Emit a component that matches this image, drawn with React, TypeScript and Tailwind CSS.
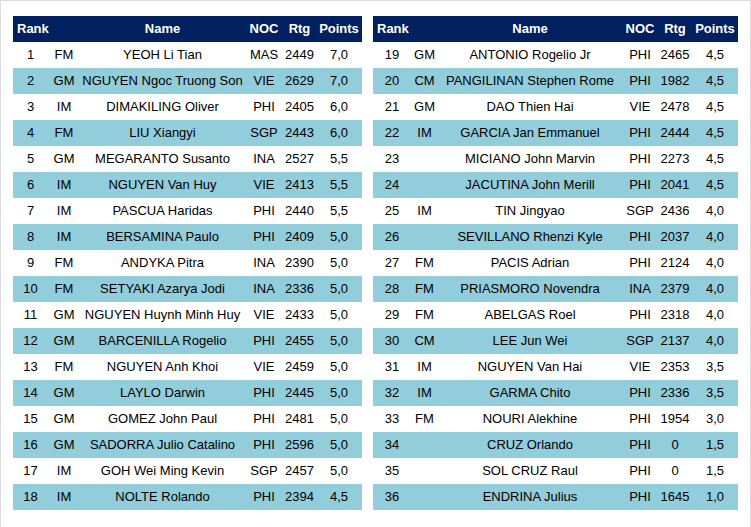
type Row = [number, string, string, string, string, string]

const left: Row[] = [
  [1, 'FM', 'YEOH Li Tian', 'MAS', '2449', '7,0'],
  [2, 'GM', 'NGUYEN Ngoc Truong Son', 'VIE', '2629', '7,0'],
  [3, 'IM', 'DIMAKILING Oliver', 'PHI', '2405', '6,0'],
  [4, 'FM', 'LIU Xiangyi', 'SGP', '2443', '6,0'],
  [5, 'GM', 'MEGARANTO Susanto', 'INA', '2527', '5,5'],
  [6, 'IM', 'NGUYEN Van Huy', 'VIE', '2413', '5,5'],
  [7, 'IM', 'PASCUA Haridas', 'PHI', '2440', '5,5'],
  [8, 'IM', 'BERSAMINA Paulo', 'PHI', '2409', '5,0'],
  [9, 'FM', 'ANDYKA Pitra', 'INA', '2390', '5,0'],
  [10, 'FM', 'SETYAKI Azarya Jodi', 'INA', '2336', '5,0'],
  [11, 'GM', 'NGUYEN Huynh Minh Huy', 'VIE', '2433', '5,0'],
  [12, 'GM', 'BARCENILLA Rogelio', 'PHI', '2455', '5,0'],
  [13, 'FM', 'NGUYEN Anh Khoi', 'VIE', '2459', '5,0'],
  [14, 'GM', 'LAYLO Darwin', 'PHI', '2445', '5,0'],
  [15, 'GM', 'GOMEZ John Paul', 'PHI', '2481', '5,0'],
  [16, 'GM', 'SADORRA Julio Catalino', 'PHI', '2596', '5,0'],
  [17, 'IM', 'GOH Wei Ming Kevin', 'SGP', '2457', '5,0'],
  [18, 'IM', 'NOLTE Rolando', 'PHI', '2394', '4,5'],
]

const right: Row[] = [
  [19, 'GM', 'ANTONIO Rogelio Jr', 'PHI', '2465', '4,5'],
  [20, 'CM', 'PANGILINAN Stephen Rome', 'PHI', '1982', '4,5'],
  [21, 'GM', 'DAO Thien Hai', 'VIE', '2478', '4,5'],
  [22, 'IM', 'GARCIA Jan Emmanuel', 'PHI', '2444', '4,5'],
  [23, '', 'MICIANO John Marvin', 'PHI', '2273', '4,5'],
  [24, '', 'JACUTINA John Merill', 'PHI', '2041', '4,5'],
  [25, 'IM', 'TIN Jingyao', 'SGP', '2436', '4,0'],
  [26, '', 'SEVILLANO Rhenzi Kyle', 'PHI', '2037', '4,0'],
  [27, 'FM', 'PACIS Adrian', 'PHI', '2124', '4,0'],
  [28, 'FM', 'PRIASMORO Novendra', 'INA', '2379', '4,0'],
  [29, 'FM', 'ABELGAS Roel', 'PHI', '2318', '4,0'],
  [30, 'CM', 'LEE Jun Wei', 'SGP', '2137', '4,0'],
  [31, 'IM', 'NGUYEN Van Hai', 'VIE', '2353', '3,5'],
  [32, 'IM', 'GARMA Chito', 'PHI', '2336', '3,5'],
  [33, 'FM', 'NOURI Alekhine', 'PHI', '1954', '3,0'],
  [34, '', 'CRUZ Orlando', 'PHI', '0', '1,5'],
  [35, '', 'SOL CRUZ Raul', 'PHI', '0', '1,5'],
  [36, '', 'ENDRINA Julius', 'PHI', '1645', '1,0'],
]

function Standings({ rows, cols, width }: { rows: Row[]; cols: number[]; width: string }) {
  return (
    <table className={`table-fixed border-collapse ${width}`}>
      <colgroup>
        {cols.map((w, i) => (
          <col key={i} style={{ width: w }} />
        ))}
      </colgroup>
      <thead>
        <tr className="h-[26px] bg-[#002060] text-white font-bold">
          <th className="p-0 pl-[4px] text-left font-bold">Rank</th>
          <th className="p-0"></th>
          <th className="p-0 text-center font-bold">Name</th>
          <th className="p-0 text-center font-bold">NOC</th>
          <th className="p-0 text-center font-bold">Rtg</th>
          <th className="p-0 text-center font-bold">Points</th>
        </tr>
      </thead>
      <tbody>
        {rows.map((r) => (
          <tr key={r[0]} className={`h-[26px] ${r[0] % 2 === 0 ? 'bg-[#92cddc]' : 'bg-white'}`}>
            {r.map((cell, i) => (
              <td key={i} className="p-0 text-center whitespace-nowrap">
                {cell}
              </td>
            ))}
          </tr>
        ))}
      </tbody>
    </table>
  )
}

export default function App() {
  return (
    <div
      className="h-[527px] w-[751px] bg-white border-t border-l border-r border-[#dcdcdc] flex items-start gap-[11px] pt-[15px] pl-[12px] text-[13px] text-black"
      style={{ fontFamily: '"Liberation Sans", Arial, sans-serif' }}
    >
      <Standings rows={left} cols={[35, 32, 165, 38, 33, 46]} width="w-[349px]" />
      <Standings rows={right} cols={[38, 27, 184, 36, 34, 46]} width="w-[365px]" />
    </div>
  )
}
